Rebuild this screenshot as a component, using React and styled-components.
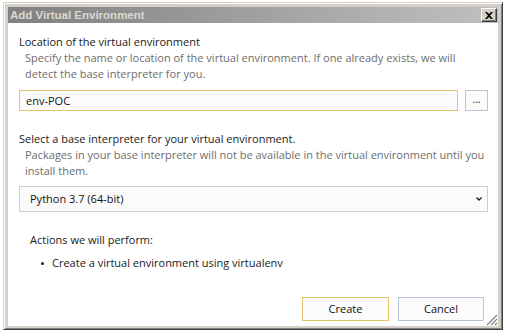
import styled, { createGlobalStyle } from "styled-components";

const GlobalStyle = createGlobalStyle`
  html, body {
    margin: 0;
    padding: 0;
    background: #ffffff;
  }
  body {
    font-family: "Open Sans", "Noto Sans", sans-serif;
  }
`;

const Page = styled.div`
  width: 508px;
  height: 334px;
  padding: 2px 0 0 3px;
  box-sizing: border-box;
`;

const Window = styled.div`
  width: 500px;
  height: 328px;
  box-sizing: border-box;
  display: flex;
  flex-direction: column;
  background: #d4d0c8;
  border: 1px solid;
  border-color: #d4d0c8 #404040 #404040 #d4d0c8;
  box-shadow: inset 1px 1px #ffffff, inset -1px -1px #808080;
  padding: 4px 4px 3px 4px;
`;

const TitleBar = styled.div`
  height: 16px;
  display: flex;
  align-items: center;
  justify-content: space-between;
  padding: 0 1px 0 2px;
  background: linear-gradient(to right, #808080, #c0c0c0);
`;

const Title = styled.span`
  font-family: "Liberation Sans", Arial, sans-serif;
  font-weight: bold;
  font-size: 11.5px;
  color: #dcd8d0;
`;

const CloseButton = styled.div`
  width: 16px;
  height: 14px;
  box-sizing: border-box;
  background: #d4d0c8;
  border: 1px solid;
  border-color: #ffffff #404040 #404040 #ffffff;
  box-shadow: inset -1px -1px #808080;
  display: flex;
  align-items: center;
  justify-content: center;
`;

const Client = styled.div`
  position: relative;
  flex: 1;
  background: #ffffff;
  padding: 11px 10px 0 11px;
  font-size: 11px;
  line-height: 16px;
  color: #1a1a1a;
`;

const Label = styled.div`
  margin-top: ${(p) => p.$top || 0}px;
  padding-left: ${(p) => p.$indent || 0}px;
`;

const Hint = styled.div`
  padding-left: 6px;
  color: #6d6d6d;
`;

const Row = styled.div`
  display: flex;
  gap: 7px;
  margin-top: ${(p) => p.$top || 0}px;
`;

const TextBox = styled.div`
  flex: 1;
  height: 21px;
  box-sizing: border-box;
  border: 1px solid #e6c36a;
  background: #fbfbfb;
  padding-left: 6px;
  display: flex;
  align-items: center;
  color: #111;
`;

const Browse = styled.div`
  width: 23px;
  height: 21px;
  box-sizing: border-box;
  border: 1px solid #bac4d6;
  background: #fbfbfb;
  display: flex;
  align-items: center;
  justify-content: center;
  padding-bottom: 3px;
  font-size: 10px;
`;

const Select = styled.div`
  margin-top: 7px;
  height: 26px;
  box-sizing: border-box;
  border: 1px solid #c8d0dc;
  background: #fbfbfb;
  display: flex;
  align-items: center;
  justify-content: space-between;
  padding: 0 5px 0 10px;
  color: #111;
`;

const Bullet = styled.div`
  margin-top: 7px;
  padding-left: 22px;
  display: flex;
  align-items: center;
  gap: 8px;
  &::before {
    content: "";
    width: 3px;
    height: 3px;
    border-radius: 50%;
    background: #222;
  }
`;

const Footer = styled.div`
  display: flex;
  justify-content: flex-end;
  gap: 9px;
  margin-top: 26px;
  padding-right: 4px;
`;

const Button = styled.div`
  width: ${(p) => p.$width}px;
  height: 24px;
  box-sizing: border-box;
  border: 1px solid ${(p) => (p.$primary ? "#e6c36a" : "#b8c4d8")};
  background: #fbfbfb;
  display: flex;
  align-items: center;
  justify-content: center;
  color: #111;
`;

const Grip = styled.svg`
  position: absolute;
  right: 0;
  bottom: 0;
`;

export default function App() {
  return (
    <>
      <GlobalStyle />
      <Page>
        <Window>
          <TitleBar>
            <Title>Add Virtual Environment</Title>
            <CloseButton>
              <svg width="8" height="7" viewBox="0 0 8 7">
                <path d="M0 0h2l2 2 2-2h2L5 3.5 8 7H6L4 5 2 7H0l3-3.5z" fill="#000" />
              </svg>
            </CloseButton>
          </TitleBar>
          <Client>
            <Label>Location of the virtual environment</Label>
            <Hint>
              Specify the name or location of the virtual environment. If one already exists, we will
              <br />
              detect the base interpreter for you.
            </Hint>
            <Row $top={8}>
              <TextBox>env-POC</TextBox>
              <Browse>...</Browse>
            </Row>
            <Label $top={20}>Select a base interpreter for your virtual environment.</Label>
            <Hint>
              Packages in your base interpreter will not be available in the virtual environment until you
              <br />
              install them.
            </Hint>
            <Select>
              <span>Python 3.7 (64-bit)</span>
              <svg width="6" height="4" viewBox="0 0 6 4">
                <path d="M0.5 0.5 3 3 5.5 0.5" stroke="#222" strokeWidth="1.4" fill="none" />
              </svg>
            </Select>
            <Label $top={20} $indent={11}>Actions we will perform:</Label>
            <Bullet>Create a virtual environment using virtualenv</Bullet>
            <Footer>
              <Button $primary $width={87}>Create</Button>
              <Button $width={86}>Cancel</Button>
            </Footer>
            <Grip width="12" height="12" viewBox="0 0 12 12">
              <path d="M11 1 1 11M11 5 5 11M11 9 9 11" stroke="#808080" strokeWidth="1.2" />
              <path d="M12 2 2 12M12 6 6 12M12 10 10 12" stroke="#ffffff" strokeWidth="1" />
            </Grip>
          </Client>
        </Window>
      </Page>
    </>
  );
}
